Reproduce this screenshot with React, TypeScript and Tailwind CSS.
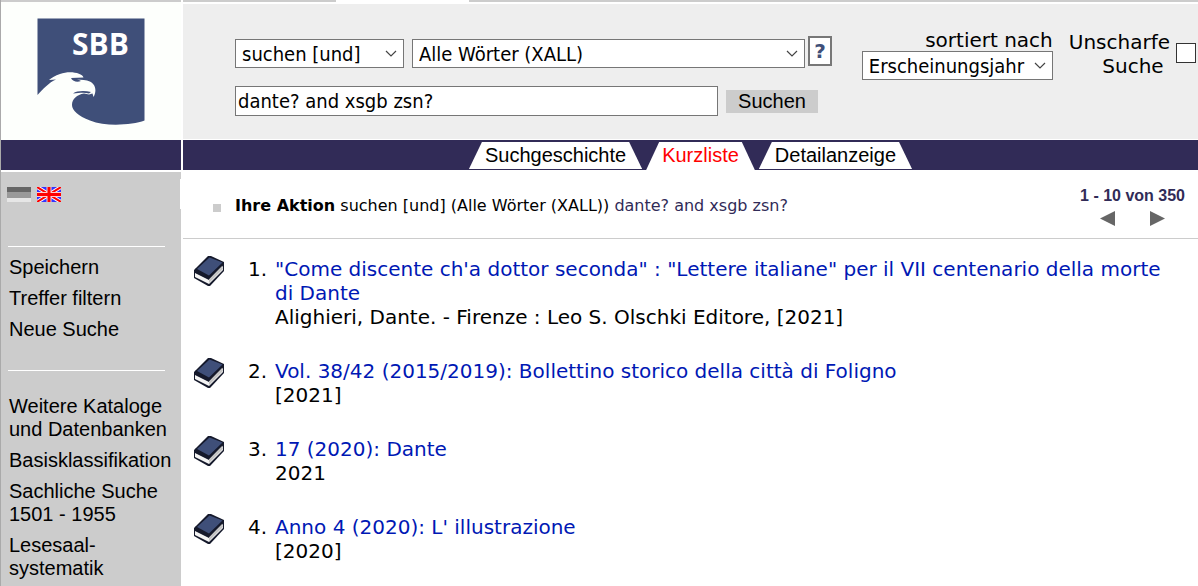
import React, { useState } from 'react';

interface Hit {
  id: number;
  title: string;
  details: string;
}

const hits: Hit[] = [
  {
    id: 1,
    title: '"Come discente ch\'a dottor seconda" : "Lettere italiane" per il VII centenario della morte di Dante',
    details: 'Alighieri, Dante. - Firenze : Leo S. Olschki Editore, [2021]',
  },
  { id: 2, title: 'Vol. 38/42 (2015/2019): Bollettino storico della città di Foligno', details: '[2021]' },
  { id: 3, title: '17 (2020): Dante', details: '2021' },
  { id: 4, title: "Anno 4 (2020): L' illustrazione", details: '[2020]' },
];

const actionLinks = ['Speichern', 'Treffer filtern', 'Neue Suche'];

const catalogLinks = [
  ['Weitere Kataloge', 'und Datenbanken'],
  ['Basisklassifikation'],
  ['Sachliche Suche', '1501 - 1955'],
  ['Lesesaal-', 'systematik'],
];

const tabs = ['Suchgeschichte', 'Kurzliste', 'Detailanzeige'];

function Logo() {
  return (
    <svg width="108" height="108" viewBox="37 18 108 108" role="img" aria-label="SBB">
      <path
        fill="#3f4f79"
        d="M37.5 18.5H144.5V120.5C132 125 106 127 90 120.5C78 116 72 110 72 105C72 99 77 94.500 84 93.500L89 94.500L92.500 93.500L93.500 97C96.500 92 97 83 87 80.500C83 79.500 78 79.700 72 79L71 78L83.500 77.500C82 73 70 70.500 60 74C55 75.500 52 77.500 49 80L56 79.500C49 82.500 43 89 37.500 95Z"
      />
      <path fill="#3f4f79" d="M71 78.500C73 81.500 77 82.500 81 81L77 79ZM73 93.500C77 90.500 85 90.500 91 92L89 93.500C84 92 79 93 73 93.500Z" />
      <text x="72" y="55" fill="#fff" className="font-['Open_Sans',sans-serif] text-[30px] font-bold">
        SBB
      </text>
    </svg>
  );
}

function GermanFlag() {
  return (
    <svg width="24" height="15" viewBox="0 0 24 15">
      <path fill="#666" d="M0 0h24v5H0z" />
      <path fill="#999" d="M0 5h24v6H0z" />
      <path fill="#e6e6e6" d="M0 11h24v4H0z" />
    </svg>
  );
}

function BritishFlag() {
  return (
    <svg width="24" height="15" viewBox="0 0 24 15">
      <path fill="#33f" d="M0 0h24v15H0z" />
      <path stroke="#fff" strokeWidth="4" d="M0 0l24 15M24 0L0 15" />
      <path stroke="#f00" strokeWidth="2" d="M0 0l24 15M24 0L0 15" />
      <path stroke="#fcc" strokeWidth="5" d="M12 0v15M0 7.500h24" />
      <path stroke="#f00" strokeWidth="3" d="M12 0v15M0 7.500h24" />
    </svg>
  );
}

function BookIcon() {
  return (
    <svg width="30" height="30" viewBox="0 0 30 30" className="-mt-px shrink-0">
      <path fill="#15192b" d="M0 14L14 0H17L30 6V15L16 30H14L0 22Z" />
      <path fill="#f4f4f4" d="M1 17L15 24L29 10V14L15 28L1 21Z" />
      <path fill="#c4c4c4" d="M15 23L28 9L29 13L15 27Z" />
      <path fill="#15192b" d="M1 14L2 12L15 19L29 6V9L15 23L1 16Z" />
      <path fill="#3f4f79" d="M3 13L15.500 1.500L28.500 6.500L15 19.500Z" />
    </svg>
  );
}

interface SelectBoxProps {
  label: string;
  value: string;
  className: string;
}

function SelectBox({ label, value, className }: SelectBoxProps) {
  return (
    <div className={`relative ${className}`}>
      <select
        aria-label={label}
        className="block h-[29px] w-full appearance-none border border-[#767676] bg-white pl-[6px] pr-6 font-['DejaVu_Sans_Condensed','DejaVu_Sans',sans-serif] text-[20px] leading-[26px] font-stretch-condensed text-black"
      >
        <option>{value}</option>
      </select>
      <svg width="12" height="7" viewBox="0 0 12 7" className="pointer-events-none absolute top-[11px] right-[7px]">
        <path d="M1 1L6 6L11 1" fill="none" stroke="#444" strokeWidth="1.200" />
      </svg>
    </div>
  );
}

export default function App() {
  const [query, setQuery] = useState('dante? and xsgb zsn?');
  const [activeTab, setActiveTab] = useState('Kurzliste');

  return (
    <div className="flex min-h-screen gap-[2px] bg-white font-['DejaVu_Sans',sans-serif] text-[20px] leading-6 text-black">
      {/* Sidebar */}
      <aside className="flex w-[181px] shrink-0 flex-col border-l border-[#aaa] font-['Liberation_Sans',sans-serif] leading-[23px]">
        <div className="h-[2px] bg-[#ccc]" />
        <a href="#" className="flex h-[138px] items-start bg-[#fdfffc] pt-4 pl-9">
          <Logo />
        </a>
        <div className="h-[30px] bg-[#312b57]" />
        <div className="mt-[2px] flex-1 bg-[#ccc] pt-[7px]">
          <div className="flex h-[30px] items-center gap-[6px] border-r border-white pl-[6px]">
            <a href="#" aria-label="Deutsch"><GermanFlag /></a>
            <a href="#" aria-label="English"><BritishFlag /></a>
          </div>
          <hr className="mt-[37px] mr-4 ml-[7px] border-white" />
          <ul className="mt-[9px] flex flex-col gap-2 pl-2">
            {actionLinks.map((link) => (
              <li key={link}>
                <a href="#">{link}</a>
              </li>
            ))}
          </ul>
          <hr className="mt-[29px] mr-4 ml-[7px] border-white" />
          <ul className="mt-6 flex flex-col gap-2 pl-2 whitespace-nowrap">
            {catalogLinks.map((lines) => (
              <li key={lines[0]}>
                <a href="#">
                  {lines.map((line) => (
                    <span key={line} className="block">{line}</span>
                  ))}
                </a>
              </li>
            ))}
          </ul>
        </div>
      </aside>

      <main className="min-w-0 flex-1">
        <div className="flex h-[2px]">
          <div className="w-[153px] bg-[#ccc]" />
          <div className="ml-[133px] flex-1 bg-[#ccc]" />
        </div>

        {/* Search form */}
        <form className="mt-[2px] flex h-[135px] justify-between bg-[#eee] pl-[52px]" onSubmit={(e) => e.preventDefault()}>
          <div className="w-[597px] pt-8">
            <div className="flex h-8 items-start">
              <SelectBox label="Suchaktion" value="suchen [und]" className="mt-[3px] w-[169px]" />
              <SelectBox label="Suchschlüssel" value="Alle Wörter (XALL)" className="mt-[3px] ml-2 flex-1" />
              <button
                type="button"
                className="ml-[3px] h-[30px] w-6 border-2 border-[#777] bg-white font-['DejaVu_Sans',sans-serif] text-[20px] leading-6 font-bold text-[#3f4f79]"
              >
                ?
              </button>
            </div>
            <div className="mt-[18px] flex items-center gap-2">
              <input
                type="text"
                aria-label="Suchbegriff"
                value={query}
                onChange={(e) => setQuery(e.target.value)}
                className="h-[30px] w-[483px] border border-[#767676] bg-white px-[2px] font-['DejaVu_Sans_Condensed','DejaVu_Sans',sans-serif] text-[20px] font-stretch-condensed"
              />
              <button type="submit" className="h-[23px] w-[92px] bg-[#ccc] font-['Liberation_Sans',sans-serif] text-[20px] leading-[23px]">
                Suchen
              </button>
            </div>
          </div>

          <div className="flex items-start pt-6 pr-[2px]">
            <div className="w-[191px] text-right">
              <span className="block h-[23px]">sortiert nach</span>
              <SelectBox label="sortiert nach" value="Erscheinungsjahr" className="w-full" />
            </div>
            <label htmlFor="fuzzy" className="ml-4 pt-[2px] text-right">
              Unscharfe
              <br />
              Suche&nbsp;
            </label>
            <input id="fuzzy" type="checkbox" className="mt-[15px] ml-[6px] size-5 appearance-none border border-[#333] bg-white checked:bg-[#312b57]" />
          </div>
        </form>

        {/* Tabs */}
        <nav className="mt-[1px] flex h-[30px] justify-center gap-1 bg-[#312b57] pt-[2px] font-['Liberation_Sans',sans-serif]">
          {tabs.map((tab) => (
            <button
              key={tab}
              type="button"
              onClick={() => setActiveTab(tab)}
              className={`bg-white px-4 leading-[26px] [clip-path:polygon(13px_0,calc(100%-13px)_0,100%_100%,0_100%)] ${
                tab === activeTab ? 'h-[28px] pb-[2px] text-[#f00]' : 'h-[27px] pb-[1px]'
              }`}
            >
              {tab}
            </button>
          ))}
        </nav>

        {/* Current action and paging */}
        <div className="flex h-[69px] items-start border-b border-[#ccc]">
          <div className="mt-[34px] ml-[30px] size-2 bg-[#ccc]" />
          <p className="mt-6 ml-[14px] text-[16px]">
            <b>Ihre Aktion</b> suchen [und] (Alle Wörter (XALL)) <span className="text-[#312b57]">dante? and xsgb zsn?</span>
          </p>
          <div className="mt-4 mr-[13px] ml-auto font-['Liberation_Sans',sans-serif] text-[16px] leading-5 font-bold text-[#312b57]">
            1 - 10 von 350
            <div className="mt-[5px] flex justify-between px-5">
              <button type="button" aria-label="Zurück">
                <svg width="15" height="15" viewBox="0 0 15 15"><path fill="#666" d="M15 0v15L0 7.500z" /></svg>
              </button>
              <button type="button" aria-label="Weiter">
                <svg width="15" height="15" viewBox="0 0 15 15"><path fill="#666" d="M0 0v15l15-7.500z" /></svg>
              </button>
            </div>
          </div>
        </div>

        <ol className="flex flex-col gap-[30px] pt-[18px] pr-4 pl-[11px]">
          {hits.map((hit) => (
            <li key={hit.id} className="flex items-start">
              <BookIcon />
              <span className="w-[43px] shrink-0 text-right">{hit.id}.</span>
              <div className="ml-2">
                <a href="#" className="text-[#0018b4]">{hit.title}</a>
                <div>{hit.details}</div>
              </div>
            </li>
          ))}
        </ol>
      </main>
    </div>
  );
}
